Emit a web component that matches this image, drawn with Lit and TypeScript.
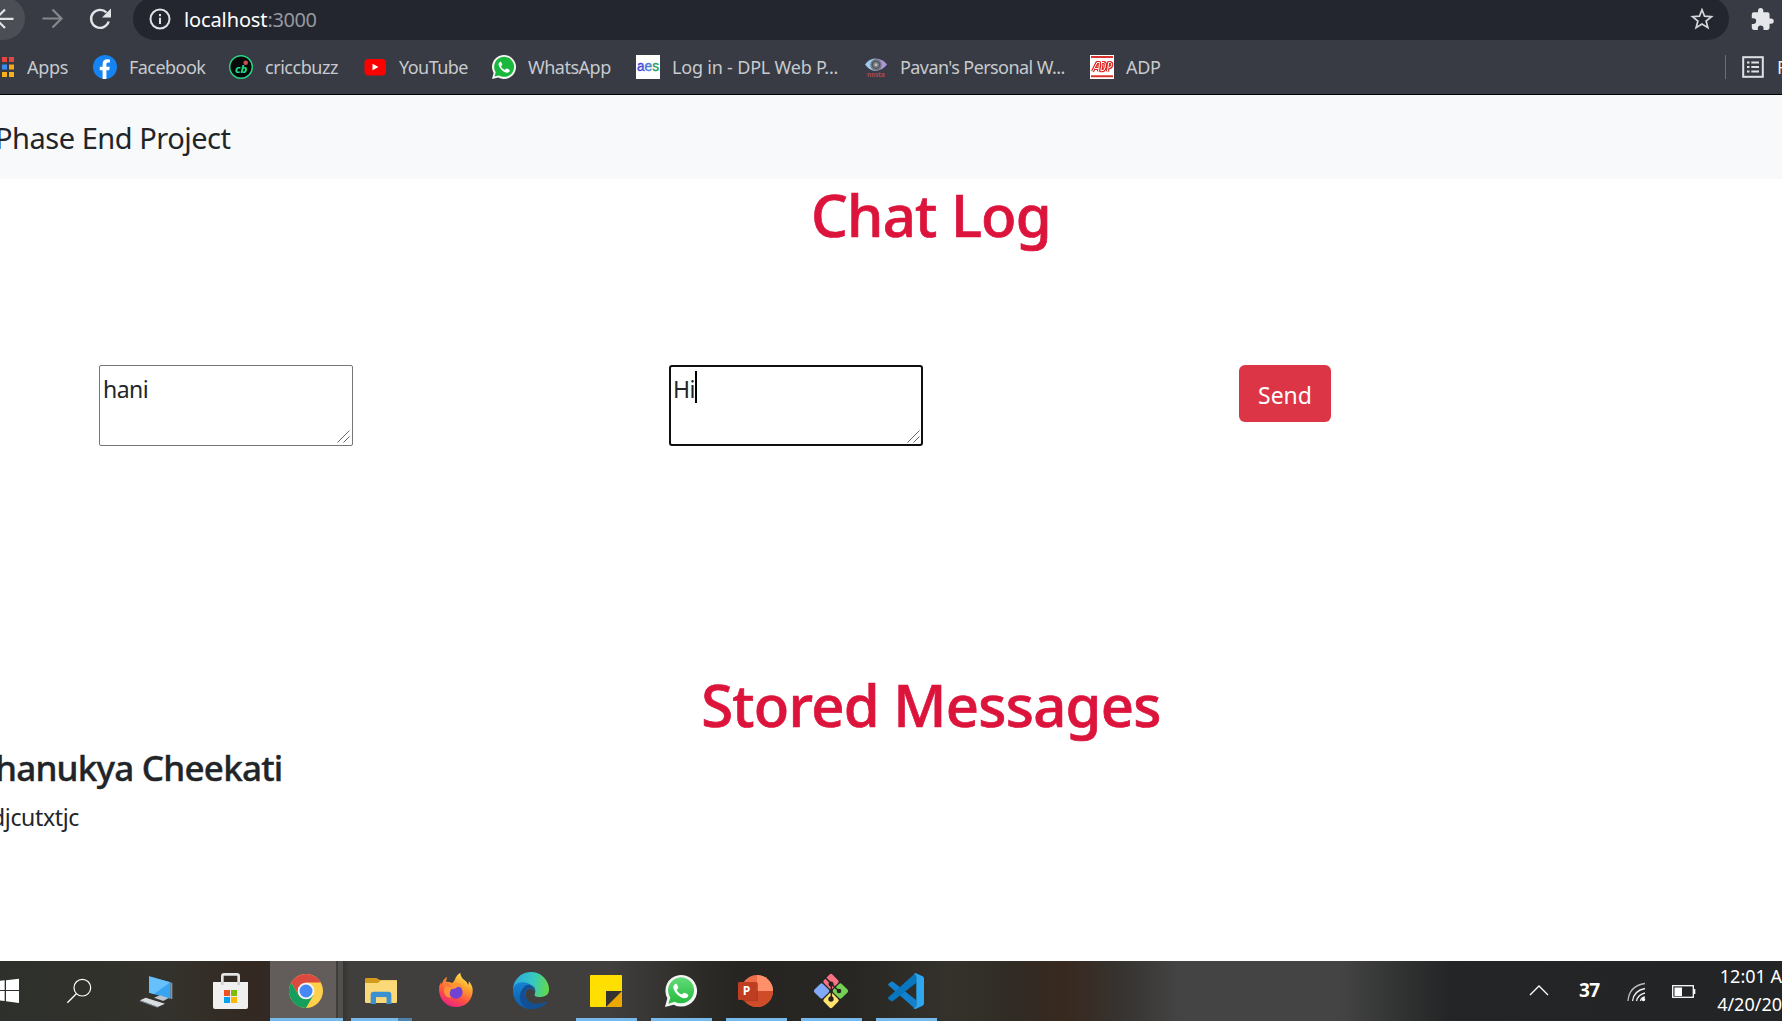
import { LitElement, html, svg, css } from "lit";
import { customElement } from "lit/decorators.js";

const waGlyph = svg`<path d="M-14 -21 C-18 -22 -24 -16 -23 -9 C-20 5 -5 20 9 23 C17 24 23 18 22 13 C21 10 12 6 9 6 C6 6 5 11 2 11 C-4 10 -11 3 -13 -2 C-13 -4 -8 -6 -8 -9 C-8 -12 -12 -20 -14 -21Z" fill="#fff"/>`;

const favicons: Record<string, unknown> = {
  apps: svg`<rect x="11" y="2" width="5" height="5" fill="#e8453c"/><rect x="18" y="2" width="5" height="5" fill="#e0493f"/>
    <rect x="11" y="9.500" width="5" height="5" fill="#3b8bf0"/><rect x="18" y="9.500" width="5" height="5" fill="#f5a81c"/>
    <rect x="11" y="17" width="5" height="5" fill="#f5b01c"/><rect x="18" y="17" width="5" height="5" fill="#f5b01c"/>`,
  facebook: svg`<circle cx="12" cy="12" r="12" fill="#1584f2"/>
    <path d="M9.600 24V15.200H6.800V11.800H9.600V9.200C9.600 6 11.300 4.300 14.200 4.300C15.500 4.300 16.900 4.600 16.900 4.600V7.500H15.300C13.800 7.500 13.400 8.400 13.400 9.400V11.800H16.800L16.200 15.200H13.400V24Z" fill="#fff"/>`,
  cricbuzz: svg`<circle cx="12" cy="12" r="11.300" fill="#050807" stroke="#27d68b" stroke-width="1.400"/>
    <text x="6" y="18" font-size="11" font-weight="700" font-style="italic" fill="#1fe08e" font-family="Open Sans, sans-serif" textLength="12.500" lengthAdjust="spacingAndGlyphs">cb</text>
    <circle cx="16.700" cy="7.700" r="2.300" fill="#c7514a"/>`,
  youtube: svg`<rect x="1.500" y="4" width="21.500" height="16.500" rx="4" fill="#fb0200"/><path d="M9.500 8.700L15.500 12L9.500 15.300Z" fill="#fff"/>`,
  whatsapp: svg`<path d="M0 24L1.600 18A12 12 0 1 1 6.200 22.500Z" fill="#f4f7f4"/><path d="M2.500 21.500L3.700 17.200A10 10 0 1 1 7 20.400Z" fill="#19b83c"/>
    <g transform="translate(12.300,12) scale(.25)">${waGlyph}</g>`,
  aes: svg`<defs><linearGradient id="ae"><stop offset=".1" stop-color="#3d3fd9"/><stop offset=".5" stop-color="#547be0"/><stop offset=".9" stop-color="#25a24c"/></linearGradient></defs>
    <rect width="24" height="24" fill="#fff"/><text x="1" y="15.800" textLength="22" lengthAdjust="spacingAndGlyphs" font-size="14.500" fill="url(#ae)" stroke="url(#ae)" stroke-width=".4" font-family="Liberation Sans, sans-serif">aes</text>`,
  eye: svg`<path d="M1 9.500Q5 4 11 3.500V16Q5 15 1 9.500Z" fill="#9fc8ec"/><path d="M23 9.500Q19 4 11 3.500V16Q19 15 23 9.500Z" fill="#b096d8"/>
    <circle cx="12" cy="9.800" r="5.800" fill="#737981"/><circle cx="12" cy="9.800" r="3.800" fill="none" stroke="#4b5058"/><circle cx="12" cy="9.800" r="1.500" fill="#b8bdc3"/>
    <text x="3" y="21.500" textLength="18" font-size="6.500" font-weight="700" fill="#a34c56" font-family="Open Sans, sans-serif">nosta</text>`,
  adp: svg`<rect width="24" height="24" fill="#fff"/><path d="M1 2H23M1 21.200H23" stroke="#d8342f" stroke-width="2"/>
    <g fill="none" stroke="#df2823" stroke-width="3.200" stroke-linejoin="round"><path d="M2.500 16.500L7 7.500H9.500L8.500 16.500M5 13.500H8.500M12 7.500H14Q16 8 15.200 12Q14.500 16 12 15.700H10.800L12 9M17.500 16.500L18.600 7.500H20.500Q22.300 8 21.600 10.500Q21 12.800 18.500 12.500"/></g>
    <g fill="none" stroke="#fff" stroke-width="1"><path d="M2.500 16.500L7 7.500H9.500L8.500 16.500M5 13.500H8.500M12 7.500H14Q16 8 15.200 12Q14.500 16 12 15.700H10.800L12 9M17.500 16.500L18.600 7.500H20.500Q22.300 8 21.600 10.500Q21 12.800 18.500 12.500"/></g>`,
};

const bookmarks = [
  ["apps", "Apps", -0.32], ["facebook", "Facebook", -0.55], ["cricbuzz", "criccbuzz", -0.45],
  ["youtube", "YouTube", -0.55], ["whatsapp", "WhatsApp", -0.5], ["aes", "Log in - DPL Web P...", -0.2],
  ["eye", "Pavan's Personal W...", -0.58], ["adp", "ADP", -0.3],
] as const;

/* Taskbar artwork is drawn at three units per pixel; x is the left edge of each 225-unit cell. */
const apps: { x: number; art: unknown; bar?: [number, number] }[] = [
  { x: -93, art: svg`<path d="M-40 82L14 76V105H-40ZM18 75.500L57 71V105H18ZM-40 108H14V138L-40 132ZM18 108H57V144L18 139Z" fill="#fff"/>` },
  { x: 132, art: svg`<circle cx="247" cy="98" r="25" fill="none" stroke="#fff" stroke-width="3.500"/><path d="M229 116L202 143" stroke="#fff" stroke-width="4"/>` },
  { x: 357, art: svg`<path d="M511 82L517 84V132L511 131Z" fill="#8b949c"/><path d="M447 64L511 82V131L447 113Z" fill="#38a4ef"/><path d="M447 64L511 82L462 117L447 113Z" fill="#67c0fb"/>
    <path d="M462 128L480 121L506 129L490 138Z" fill="#b8c5d0"/><path d="M420 136L437 128L495 146L473 156Z" fill="#d9dee3"/><path d="M420 136L473 156V158L420 139Z" fill="#8997a3"/>` },
  { x: 582, art: svg`<path d="M667 92V63Q667 58 672 58H711Q716 58 716 63V92" fill="none" stroke="#e4e4e4" stroke-width="8"/><path d="M639 81H744V156Q744 162 738 162H645Q639 162 639 156Z" fill="#f0f0f0"/><path d="M663 81H671V90H663ZM712 81H720V90H712Z" fill="#d2d2d2"/>
    <path d="M672 105H690V123H672Z" fill="#f05023"/><path d="M693 105H711V123H693Z" fill="#80bb08"/><path d="M672 126H690V144H672Z" fill="#05a3ee"/><path d="M693 126H711V144H693Z" fill="#fdb80a"/>` },
  { x: 807, bar: [810, 1029], art: svg`<path d="M810 18H1008V189H810Z" fill="#625c5a"/><path d="M1008 18H1014V189H1008Z" fill="#3f3c39"/><path d="M1014 18H1029V189H1014Z" fill="#52504d"/>
    <circle cx="918" cy="108" r="51" fill="#ffd04b"/><path d="M918 82.500H962.200A51 51 0 0 0 873.800 82.500L896 121Z" fill="#dc4a3f"/>
    <path d="M873.800 82.500A51 51 0 0 0 918 159L940 121H896Z" fill="#159e5c"/><circle cx="918" cy="108" r="25" fill="#f5f5f5"/><circle cx="918" cy="108" r="19.500" fill="#4688f4"/>` },
  { x: -18, bar: [3, 144], art: svg`<path d="M45 72Q45 69 49 69H79L90 75H137Q141 75 141 79V100H45Z" fill="#d49a1c"/><path d="M45 84H84L92 76H141V141Q141 144 137 144H49Q45 144 45 141Z" fill="#fbd878"/>
    <path d="M62 147V119Q62 110 71 110H115Q124 110 124 119V147H109V127H78V147Z" fill="#3991d2"/><path d="M78 127H109V144H78Z" fill="#fbd878"/><path d="M144 189H186V198H144Z" fill="#4f82aa"/>` },
  { x: 207, art: svg`<defs><linearGradient id="ff" x1=".8" y1="0" x2=".3" y2="1"><stop offset=".05" stop-color="#ffe84e"/><stop offset=".4" stop-color="#ff9b2b"/><stop offset=".7" stop-color="#ff4f43"/><stop offset="1" stop-color="#e7208b"/></linearGradient></defs>
    <path d="M267 105Q266 91 274 80V90L281 75L290 66L288 80Q299 80 307 84Q314 78 317 68Q321 59 331 53Q331 66 344 76Q352 81 355 90L357 79Q370 95 368 111C365 138 345 156 318 156C289 156 269 135 267 105Z" fill="url(#ff)"/>
    <circle cx="318" cy="111" r="20" fill="#7143d5"/><path d="M303 91Q309 83 321 83Q339 88 339 104Q332 93 322 96Q316 103 304 102Q294 117 304 128Q281 128 282 104Q286 89 303 91Z" fill="#ff9436"/><path d="M281 76Q275 98 289 94L306 98Q300 85 287 83L290 66Z" fill="#ff7938"/>` },
  { x: 432, art: svg`<defs><linearGradient id="e1" x1="0" y1=".4" x2="1" y2=".5"><stop offset="0" stop-color="#2fa7de"/><stop offset=".55" stop-color="#35c9c1"/><stop offset="1" stop-color="#63d946"/></linearGradient><linearGradient id="e2" x1="0" y1="0" x2="0" y2="1"><stop offset="0" stop-color="#1682d4"/><stop offset="1" stop-color="#0c5ba8"/></linearGradient></defs>
    <path d="M489 106A54 53 0 0 1 597 102C598 121 583 127 565 126C554 125 552 121 555 115C560 101 550 89 533 88C508 82 491 95 489 106Z" fill="url(#e1)"/>
    <path d="M489 108C489 84 514 76 537 86C550 91 556 102 554 111C550 98 537 97 528 108C521 129 535 149 566 147C580 146 586 142 592 138C584 153 564 162 543 162C512 162 489 138 489 108Z" fill="url(#e2)"/>
    <path d="M528 108C521 129 535 149 566 147C580 146 586 140 592 138C584 153 564 162 543 162C503 154 500 113 528 91Q544 84 554 108C545 96 535 98 528 108Z" fill="#124f94"/>` },
  { x: 657, bar: [678, 861], art: svg`<path d="M722 60H814Q816 60 816 62V109L769 156H722Q720 156 720 154V62Q720 60 722 60Z" fill="#ffdf00"/><path d="M768 108H816V156H768Z" fill="#343331"/><path d="M816 108V153Q816 156 813 156H768Z" fill="#eba900"/>` },
  { x: 12, bar: [33, 216], art: svg`<defs><linearGradient id="wg" x1="0" y1="0" x2="0" y2="1"><stop stop-color="#62dc78"/><stop offset="1" stop-color="#25b93e"/></linearGradient></defs><path d="M75 156L82 130A47.500 47.500 0 1 1 101 149Z" fill="#f5f5f5"/><path d="M85 146L91 128A39 39 0 1 1 104 140Z" fill="url(#wg)"/><g transform="translate(123,107)">${waGlyph}</g>` },
  { x: 237, bar: [258, 441], art: svg`<circle cx="351" cy="108" r="48" fill="#ee6c47"/><path d="M351 60A48 48 0 0 1 399 108H351Z" fill="#ff9069"/><path d="M303 108H399A48 48 0 0 1 303 108Z" fill="#d04c28"/><path d="M303 81H348Q354 81 354 87V139H309Q303 125 303 108Z" fill="#a6351c" opacity=".7"/>
    <rect x="294" y="81" width="54" height="54" rx="4" fill="#bf3d20"/><text x="308" y="121" font-size="36" font-weight="700" fill="#fff" font-family="Open Sans, sans-serif">P</text>` },
  { x: 462, bar: [483, 666], art: svg`<g transform="translate(573,108) rotate(45)"><rect x="-38" y="-38" width="36" height="36" rx="6" fill="#fa7184"/><rect x="2" y="-38" width="36" height="36" rx="6" fill="#76d055"/><rect x="-38" y="2" width="36" height="36" rx="6" fill="#80aaf8"/><rect x="2" y="2" width="36" height="36" rx="6" fill="#ffe36e"/></g>
    <g transform="translate(573,108)"><path d="M-19 -42L1 -22V24M1 -22L24 1" fill="none" stroke="#25231f" stroke-width="4.500"/><circle cx="0" cy="-21" r="7.500" fill="#25231f"/><circle cx="24" cy="0" r="7" fill="#25231f"/><circle cx="0" cy="24" r="8" fill="#25231f"/></g>` },
  { x: 687, bar: [708, 891], art: svg`<path d="M745 91Q743 88 746 86L753 80Q756 78 760 81L829 136V162Q824 162 820 157Z" fill="#1381cd"/><path d="M745 127Q742 130 746 133L753 138Q757 140 760 137L829 83V54Q824 55 820 60Z" fill="#0877c0"/><path d="M819 157Q828 164 829 150V66Q829 53 820 60L826 54L848 64Q852 66 852 71V145Q852 150 848 152L826 162Q822 163 819 157Z" fill="#2ca7f0"/>` },
];

const grip = html`<svg class="grip" width="13" height="13" viewBox="0 0 13 13"><path d="M.5 12.500L12.500 .5M6.500 12.500L12.500 6.500" stroke="#555" stroke-width=".9"/></svg>`;

@customElement("app-root")
export class AppRoot extends LitElement {
  static styles = css`
    :host { display: flex; flex-direction: column; width: 1782px; height: 1021px; overflow: hidden; background: #fff; color: #212529; font-family: "Noto Sans", "Open Sans", sans-serif; white-space: nowrap; }
    * { box-sizing: border-box; }
    svg { display: block; flex: none; }
    .chrome { height: 95px; flex: none; background: #383b43; border-bottom: 1px solid #000; overflow: hidden; }
    .toolbar { display: flex; height: 43px; margin-top: -3px; }
    .back { width: 43px; height: 43px; margin-left: -18px; border-radius: 22px; background: #4b4e55; flex: none; }
    .fwd { margin-left: 8px; }
    .reload { margin-left: 8px; }
    .omni { display: flex; align-items: center; width: 1596px; flex: none; margin-left: 8px; border-radius: 22px; background: #23262e; padding: 1px 14px 0 16px; font-size: 20px; color: #fff; }
    .omni .url { margin-left: 13px; letter-spacing: -.12px; flex: 1; }
    .omni .port { color: #9599a0; letter-spacing: -.38px; }
    .ext { margin: 11px 0 0 22px; }
    .bookmarks { display: flex; align-items: center; height: 54px; color: #c7cacf; font-size: 18px; }
    .list { display: grid; grid-template-columns: 102px 136px 134px 129px 144px 228px 226px 130px; margin-left: -9px; flex: 1; }
    .bm { display: flex; align-items: center; gap: 12px; height: 24px; line-height: 24px; }
    .bm span { margin-top: -1px; }
    .reading { display: flex; align-items: center; width: 57px; height: 24px; border-left: 1px solid #6b6e75; padding-left: 16px; gap: 13px; color: #eceef1; overflow: hidden; }
    .nav { height: 84px; flex: none; background: #f8f9fa; line-height: 86px; font-size: 29px; letter-spacing: -.48px; }
    .nav span { margin-left: -5px; }
    h1 { margin: 0 0 0 80px; height: 72px; line-height: 72px; text-align: center; font-size: 58px; font-weight: 500; letter-spacing: -.75px; color: #dc143c; -webkit-text-stroke: .7px #dc143c; flex: none; }
    .form { display: grid; grid-template-columns: 570px 570px auto; padding: 114px 0 0 99px; height: 418px; flex: none; justify-content: start; align-items: start; }
    .area { position: relative; display: flex; width: 254px; height: 81px; border: 1px solid #767676; border-radius: 2px; padding: 5px 0 0 3px; font-size: 23px; line-height: 36px; letter-spacing: -.5px; }
    .area.focus { border: 2px solid #101010; border-radius: 3px; padding: 4px 0 0 2px; letter-spacing: -.6px; }
    .caret { width: 2px; height: 32px; margin: 0 0 0 .5px; background: #000; }
    .grip { position: absolute; right: 2px; bottom: 2px; }
    .area.focus .grip { right: 1px; bottom: 1px; }
    .send { font: inherit; width: 92px; height: 57px; border: 0; border-radius: 6px; background: #dc3545; color: #fff; font-size: 23px; line-height: 32px; padding: 2px 0 0; letter-spacing: 0; }
    h3 { margin: 5px 0 0 -5px; height: 44px; line-height: 44px; font-size: 35px; font-weight: 500; letter-spacing: -.77px; -webkit-text-stroke: .4px #212529; flex: none; }
    p { margin: 9px 0 0 -9px; line-height: 36px; font-size: 23px; letter-spacing: -.35px; }
    .page { display: flex; flex-direction: column; height: 782px; flex: none; overflow: hidden; }
    .task { display: flex; height: 60px; flex: none; color: #fff; background: linear-gradient(90deg, #2d302b 0, #34322c 170px, #332822 255px, #32302e 340px, #403f3e 350px, #403f3d 610px, #2d2b28 700px, #262522 740px, #272622 850px, #35322c 950px, #302b25 1010px, #38291f 1065px, #363330 1120px, #444 1180px, #444 1340px, #343535 1390px, #232526 1450px, #222425 1782px); }
    .apps { display: grid; grid-template-columns: repeat(13, 75px); margin-left: -31px; width: 1559px; flex: none; }
    .tray { display: flex; align-items: flex-start; font-size: 18px; }
    .temp { font-weight: 700; font-size: 19px; line-height: 26px; margin: 16px 0 0 29px; width: 48px; letter-spacing: -.7px; }
    .clock { font-size: 18px; line-height: 28px; margin-top: 1px; text-align: right; width: 65px; }
  `;

  render() {
    return html`
      <header class="chrome">
        <div class="toolbar">
          <svg class="back" viewBox="0 0 43 43"><path d="M31.500 21.800H14M23 12.500L13.700 21.800L23 31" fill="none" stroke="#e2e4e7" stroke-width="2.200"/></svg>
          <svg class="fwd" width="43" height="43" viewBox="33 -3 43 43"><path d="M42.500 18.500H61M52.500 9.500L61.500 18.500L52.500 27.500" fill="none" stroke="#84878d" stroke-width="2.200"/></svg>
          <svg class="reload" width="41" height="43" viewBox="84 -3 41 43"><path d="M108.700 21.500A9 9 0 1 1 106.500 12.500" fill="none" stroke="#e2e4e7" stroke-width="2.400"/><path d="M111 8.500V17.500H102Z" fill="#e2e4e7"/></svg>
          <div class="omni">
            <svg width="22" height="22" viewBox="0 0 22 22"><circle cx="11" cy="11" r="9.500" fill="none" stroke="#dfe1e5" stroke-width="2"/><path d="M10 6H12V8.200H10ZM10 9.800H12V16H10Z" fill="#dfe1e5"/></svg>
            <span class="url">localhost<span class="port">:3000</span></span>
            <svg width="26" height="24" viewBox="0 0 24 24"><path d="M12 2.800L14.500 9.100L21.500 9.600L16.100 14L17.900 20.700L12 17L6.100 20.700L7.900 14L2.500 9.600L9.500 9.100Z" fill="none" stroke="#d4d6da" stroke-width="1.700"/></svg>
          </div>
          <svg class="ext" width="23" height="23" viewBox="1.500 1 21.500 22"><path d="M20.500 11H19V7a2 2 0 0 0-2-2h-4V3.500a2.500 2.500 0 0 0-5 0V5H4a2 2 0 0 0-2 2v3.800h1.500a2.700 2.700 0 0 1 0 5.400H2V20a2 2 0 0 0 2 2h3.800v-1.500a2.700 2.700 0 0 1 5.400 0V22H17a2 2 0 0 0 2-2v-4h1.500a2.500 2.500 0 0 0 0-5Z" fill="#e4e6e9"/></svg>
        </div>
        <div class="bookmarks">
          <div class="list">${bookmarks.map(([icon, label, spacing]) => html`<div class="bm"><svg width="24" height="24" viewBox="0 0 24 24">${favicons[icon]}</svg><span style="letter-spacing:${spacing}px">${label}</span></div>`)}</div>
          <div class="reading"><svg width="22" height="22" viewBox="0 0 22 22"><rect x="1.200" y="1.200" width="19.600" height="19.600" fill="none" stroke="#dfe1e5" stroke-width="2"/><path d="M5 6.500H7.500M9.300 6.500H17M5 11H7.500M9.300 11H17M5 15.500H7.500M9.300 15.500H17" stroke="#dfe1e5" stroke-width="2.200"/></svg><span>R</span></div>
        </div>
      </header>
      <nav class="nav"><span>Phase End Project</span></nav>
      <main class="page">
        <h1>Chat Log</h1>
        <section class="form">
          <div class="area">hani${grip}</div>
          <div class="area focus">Hi<i class="caret"></i>${grip}</div>
          <button class="send">Send</button>
        </section>
        <h1>Stored Messages</h1>
        <h3>hanukya Cheekati</h3>
        <p>djcutxtjc</p>
      </main>
      <footer class="task">
        <div class="apps">${apps.map(a => html`<svg width="75" height="60" viewBox="${a.x} 18 225 180">${a.art}${a.bar ? svg`<rect x=${a.bar[0]} y="189" width=${a.bar[1] - a.bar[0]} height="9" fill="#76b9ed"/>` : ""}</svg>`)}</div>
        <div class="tray">
          <svg width="22" height="60" viewBox="1528 961 22 60"><path d="M1530 995L1539 986L1548 995" fill="none" stroke="#fff" stroke-width="1.300"/></svg>
          <span class="temp">37</span>
          <svg width="90" height="60" viewBox="1627 961 90 60"><g fill="none" stroke="#eee" stroke-width="1.300"><path d="M1628 1001Q1629 986 1645 983.500" opacity=".75"/><path d="M1632.500 1001Q1634 990.500 1645 988.500"/><path d="M1636.500 1001Q1638 994.500 1645 993"/><path d="M1640.500 1001Q1641 997.500 1645 997"/></g><circle cx="1643.500" cy="999.500" r="1.700" fill="#fff"/>
            <rect x="1672.700" y="985.700" width="20.600" height="11.600" fill="none" stroke="#fff" stroke-width="1.300"/><path d="M1674.500 987.500H1682V996H1674.500ZM1694 989H1695.300V994H1694Z" fill="#fff"/></svg>
          <div class="clock"><div>12:01 A</div><div>4/20/20</div></div>
        </div>
      </footer>`;
  }
}
